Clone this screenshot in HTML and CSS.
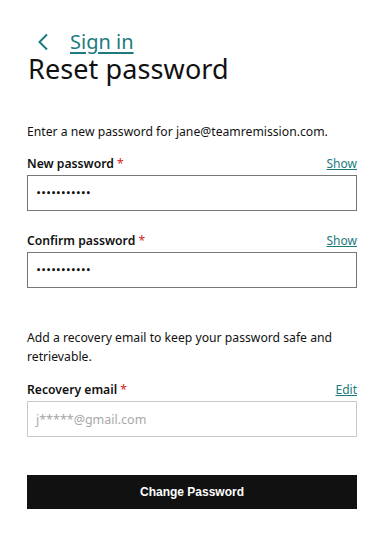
FILE: index.html
```html
<!DOCTYPE html>
<html lang="en">
<head>
<meta charset="utf-8">
<title>Reset password</title>
<link rel="stylesheet" href="styles.css">
</head>
<body>
<main class="page">
  <a class="back" href="#">
    <svg class="chev" width="12" height="18" viewBox="0 0 12 18" aria-hidden="true"><path d="M10 1.5 L2.5 9 L10 16.5" fill="none" stroke="#1d7a7e" stroke-width="2"/></svg>
    <span class="back-text">Sign in</span>
  </a>
  <h1 class="title">Reset password</h1>
  <p class="intro">Enter a new password for jane@teamremission.com.</p>

  <div class="field">
    <div class="label-row"><span class="label">New password <span class="req">*</span></span><a class="action" href="#">Show</a></div>
    <div class="input"><span class="dots">•••••••••••</span></div>
  </div>

  <div class="field">
    <div class="label-row"><span class="label">Confirm password <span class="req">*</span></span><a class="action" href="#">Show</a></div>
    <div class="input"><span class="dots">•••••••••••</span></div>
  </div>

  <p class="note">Add a recovery email to keep your password safe and retrievable.</p>

  <div class="field">
    <div class="label-row"><span class="label">Recovery email <span class="req">*</span></span><a class="action" href="#">Edit</a></div>
    <div class="input input-light"><span class="placeholder">j*****@gmail.com</span></div>
  </div>

  <button class="submit" type="button">Change Password</button>
</main>
</body>
</html>
```

FILE: styles.css
```css
* { box-sizing: border-box; }
html, body { margin: 0; padding: 0; background: #fff; }
body { font-family: "Noto Sans", "Open Sans", sans-serif; color: #111; }
.page { width: 383px; padding: 31px 26px 0 27px; display: flex; flex-direction: column; }
.back { display: flex; align-items: center; gap: 21px; color: #1d7a7e; text-decoration: none; padding-left: 10px; height: 22px; }
.chev { display: block; }
.back-text { font-size: 20px; line-height: 22px; text-decoration: underline; text-underline-offset: 3px; text-decoration-thickness: 2px; }
.title { margin: 2px 0 0 1px; font-size: 27px; font-weight: 400; line-height: 28px; letter-spacing: 0.1px; }
.intro { margin: 40px 0 0; font-size: 12.2px; line-height: 18px; }
.field { display: flex; flex-direction: column; }
.intro + .field { margin-top: 14px; }
.field + .field { margin-top: 21px; }
.label-row { display: flex; justify-content: space-between; align-items: baseline; height: 20px; }
.label { font-size: 12.2px; font-weight: 600; line-height: 18px; }
.req { color: #d21f1f; font-weight: 400; }
.action { font-size: 12px; color: #1d7a7e; text-decoration: underline; line-height: 18px; }
.input { height: 36px; border: 1px solid #767676; display: flex; align-items: center; padding-left: 8px; }
.input-light { border-color: #c8c8c8; }
.dots { font-family: "DejaVu Sans", sans-serif; font-size: 8px; font-weight: 700; letter-spacing: -0.15px; color: #111; }
.placeholder { font-size: 12.5px; color: #a8a8a8; }
.note { margin: 40px 0 15px; font-size: 12.2px; line-height: 19px; }
.submit { margin-top: 38px; height: 34px; border: 0; background: #111; color: #fff; font-family: "Liberation Sans", Arial, sans-serif; font-weight: 700; font-size: 12px; cursor: pointer; }
```
